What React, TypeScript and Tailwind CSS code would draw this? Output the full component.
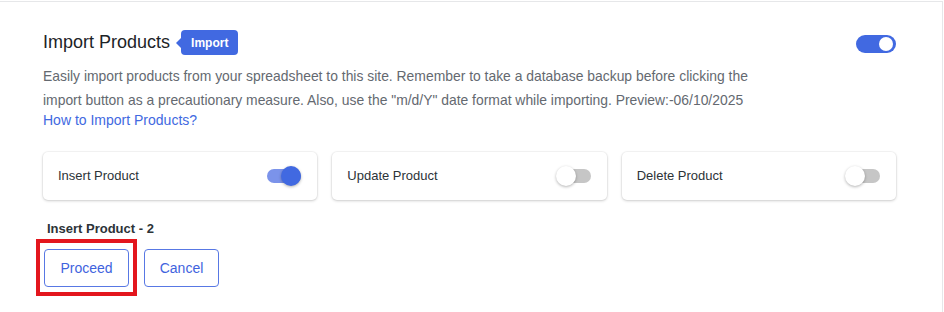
import React from "react";

function Switch({ on }: { on: boolean }) {
  return (
    <div className="relative w-[36px] h-[20px] shrink-0">
      <div
        className={`absolute left-[1px] top-[3px] w-[34px] h-[14px] rounded-full ${
          on ? "bg-[#7b93ea]" : "bg-[#c6c6c6]"
        }`}
      />
      <div
        className={`absolute top-0 w-[20px] h-[20px] rounded-full shadow-[0_1px_3px_rgba(0,0,0,0.3)] ${
          on ? "left-[15px] bg-[#4169e1]" : "left-0 bg-white"
        }`}
      />
    </div>
  );
}

function OptionCard({ label, on }: { label: string; on: boolean }) {
  return (
    <div className="flex-1 h-[48px] bg-white rounded-[5px] shadow-[0_1px_3px_rgba(0,0,0,0.18),0_0_0_1px_rgba(0,0,0,0.03)] flex items-center justify-between pl-[15px] pr-[15px]">
      <span className="text-[13px] text-[#2c3338]">{label}</span>
      <Switch on={on} />
    </div>
  );
}

export default function App() {
  return (
    <div
      className="w-[944px] h-[312px] bg-white overflow-hidden"
      style={{ fontFamily: '"Liberation Sans", Arial, sans-serif' }}
    >
      <div className="mt-px w-[943px] h-[320px] border-t border-r border-[#e6e7e9] pl-[43px] pr-[46px] pt-[28px]">
        <div className="flex items-center justify-between">
          <div className="flex items-center">
            <h2 className="text-[18px] leading-[25px] text-[#1d2327]">Import Products</h2>
            <div className="ml-[6px] flex items-center">
              <div className="w-0 h-0 border-y-[5px] border-y-transparent border-r-[5px] border-r-[#4169e1]" />
              <div className="h-[25px] px-[10px] rounded-[4px] bg-[#4169e1] text-white text-[12px] font-bold flex items-center">
                Import
              </div>
            </div>
          </div>
          <div className="relative w-[40px] h-[18px] rounded-full bg-[#4169e1] mt-[2px]">
            <div className="absolute right-[3px] top-[2px] w-[14px] h-[14px] rounded-full bg-white" />
          </div>
        </div>
        <p className="mt-[9px] text-[13.9px] leading-[24px] text-[#646970] w-[720px]">
          Easily import products from your spreadsheet to this site. Remember to take a database backup before clicking the import button as a precautionary measure. Also, use the "m/d/Y" date format while importing. Preview:-06/10/2025
        </p>
        <a className="block text-[14px] leading-[16px] text-[#4169e1]">How to Import Products?</a>
        <div className="mt-[24px] flex gap-[15px]">
          <OptionCard label="Insert Product" on={true} />
          <OptionCard label="Update Product" on={false} />
          <OptionCard label="Delete Product" on={false} />
        </div>
        <div className="mt-[21px] ml-[4px] text-[13px] leading-[16px] font-bold text-[#2c3338]">
          Insert Product - 2
        </div>
        <div className="mt-[12px] flex gap-[15px] ml-[1px]">
          <div className="relative">
            <button className="w-[85px] h-[38px] rounded-[4px] border border-[#5878e4] text-[14px] text-[#3f63de] bg-white">
              Proceed
            </button>
            <div className="absolute left-[-8px] right-[-8px] top-[-10px] bottom-[-9px] border-4 border-[#e3161d] pointer-events-none" />
          </div>
          <button className="w-[75px] h-[38px] rounded-[4px] border border-[#5878e4] text-[14px] text-[#3f63de] bg-white">
            Cancel
          </button>
        </div>
      </div>
    </div>
  );
}
